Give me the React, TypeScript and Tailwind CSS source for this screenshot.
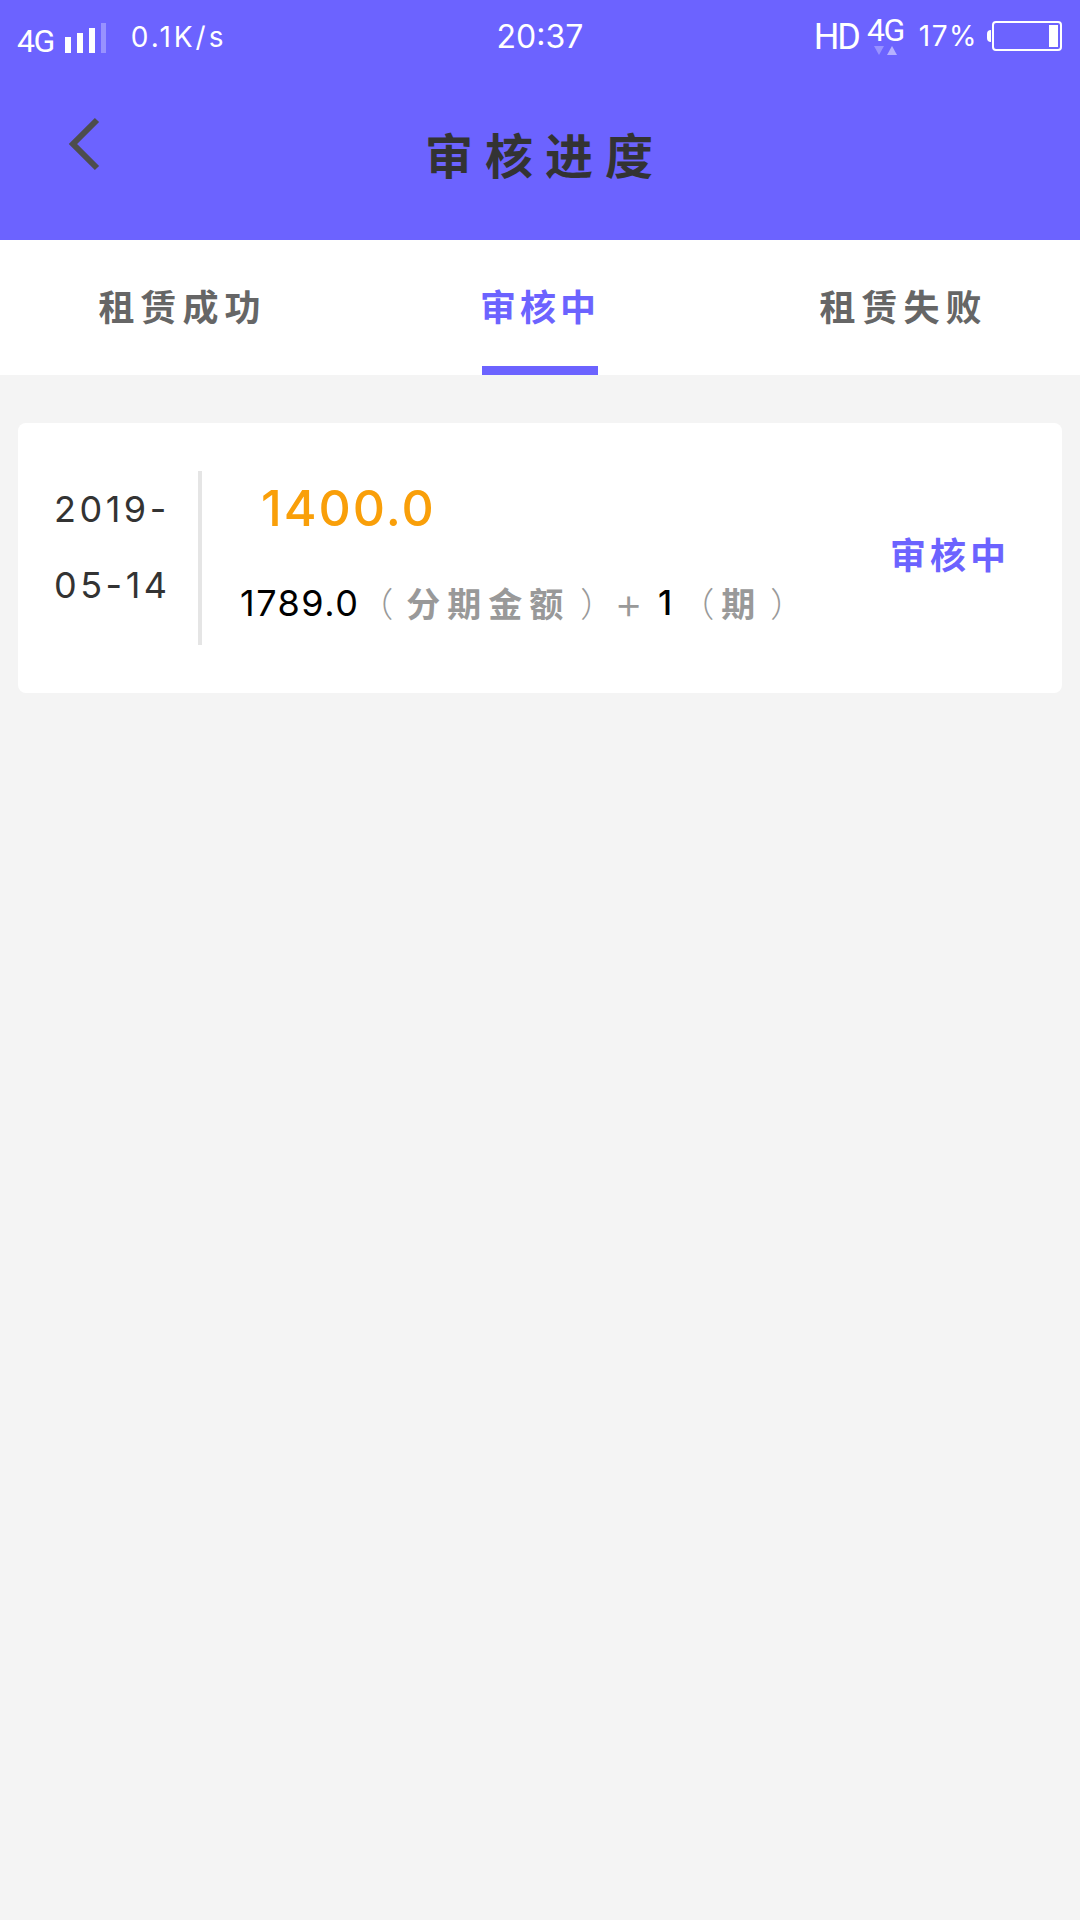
const cjk = "font-['Noto_Sans_CJK_SC',sans-serif] font-bold";
const num = "font-['Inter','Noto_Sans_CJK_SC',sans-serif]";
const paren = "font-['Noto_Sans_CJK_SC',sans-serif] font-light text-[34px] tracking-normal text-[#999]";

function StatusBar() {
  return (
    <div className="grid h-[74px] grid-cols-3 text-white">
      <div className="flex items-start">
        <span className="ml-[17px] mt-[22px] font-['Roboto',sans-serif] text-[32px] leading-[38px] tracking-[-1.5px]">4G</span>
        <div className="ml-[11px] mt-[23px] flex h-[30px] items-end gap-[6px]">
          <span className="h-[16px] w-[6px] bg-white" />
          <span className="h-[20px] w-[6px] bg-white" />
          <span className="h-[25px] w-[6px] bg-white" />
          <span className="h-[30px] w-[5px] bg-white/30" />
        </div>
        <span className={`ml-[25px] mt-[19px] text-[28px] leading-[36px] tracking-[3px] ${num}`}>0.1K/s</span>
      </div>
      <div className={`mt-[18px] text-center text-[32px] leading-[38px] ${num}`}>20:37</div>
      <div className="flex items-start justify-end pr-[18px]">
        <span className="mt-[16px] font-['Roboto',sans-serif] text-[36px] leading-[42px] tracking-[-2px]">HD</span>
        <div className="ml-[8px] flex flex-col items-center">
          <span className="mt-[12px] font-['Roboto',sans-serif] text-[32px] leading-[37px] tracking-[-1.5px]">4G</span>
          <div className="mt-[-3px] flex gap-[3px]">
            <span className="h-0 w-0 border-x-[5px] border-t-[9px] border-x-transparent border-t-white/30" />
            <span className="h-0 w-0 border-x-[5px] border-b-[9px] border-x-transparent border-b-white/50" />
          </div>
        </div>
        <span className={`ml-[15px] mt-[18px] text-[28px] leading-[36px] tracking-[1.5px] ${num}`}>17%</span>
        <div className="ml-[9px] mt-[21px] flex items-center">
          <span className="h-[12px] w-[4px] rounded-l-full bg-white" />
          <div className="ml-[1px] flex h-[30px] w-[70px] justify-end rounded-[4px] border-2 border-white p-[2px]">
            <span className="h-full w-[9px] bg-white" />
          </div>
        </div>
      </div>
    </div>
  );
}

function Header() {
  return (
    <header className="h-[240px] bg-[#6c63ff]">
      <StatusBar />
      <div className="relative flex h-[166px] items-start justify-center">
        <svg className="absolute left-[63px] top-[38px]" width="42" height="60" viewBox="0 0 42 60" fill="none" stroke="#4d4d4d" strokeWidth="6">
          <path d="M34 8L10 32L34 56" />
        </svg>
        <h1 className={`ml-[10px] mt-[46px] text-[48px] leading-[66px] tracking-[12px] text-[#333] ${cjk}`}>审核进度</h1>
      </div>
    </header>
  );
}

function Tabs() {
  return (
    <nav className="grid h-[135px] grid-cols-3 bg-white">
      <div className="flex items-center justify-center pb-[6px] pl-[5px]">
        <span className={`text-[36px] tracking-[6px] text-[#666] ${cjk}`}>租赁成功</span>
      </div>
      <div className="relative flex items-center justify-center pb-[6px]">
        <span className={`text-[36px] tracking-[4px] text-[#6c63ff] ${cjk}`}>审核中</span>
        <span className="absolute bottom-0 left-[122px] h-[9px] w-[116px] bg-[#6c63ff]" />
      </div>
      <div className="flex items-center justify-center pb-[6px] pl-[7px]">
        <span className={`text-[36px] tracking-[6px] text-[#666] ${cjk}`}>租赁失败</span>
      </div>
    </nav>
  );
}

function OrderCard() {
  return (
    <div className="mx-[18px] mt-[48px] flex h-[270px] items-center rounded-[8px] bg-white">
      <div className={`w-[180px] pb-[22px] pl-[36px] text-[36px] leading-[76px] tracking-[3.5px] text-[#333] ${num}`}>
        <div>2019-</div>
        <div>05-14</div>
      </div>
      <div className="h-[174px] w-[4px] bg-[#e5e5e5]" />
      <div className="ml-[38px] flex-1 pb-[11px]">
        <div className={`ml-[21px] text-[50px] font-medium leading-[60px] tracking-[2px] text-[#f99f09] ${num}`}>1400.0</div>
        <div className={`mt-[41px] flex items-center text-[34px] leading-[48px] text-black ${num}`}>
          <span className="text-[36px] tracking-[1.5px]">1789.0</span>
          <span className={paren}>（</span>
          <span className={`ml-[13px] tracking-[7px] text-[#999] ${cjk} text-[34px]`}>分期金额</span>
          <span className={`ml-[10px] ${paren}`}>）</span>
          <span className="text-[44px] font-light text-[#999]">+</span>
          <span className="ml-[15px] font-medium">1</span>
          <span className={`ml-[8px] ${paren}`}>（</span>
          <span className={`ml-[7px] text-[#999] ${cjk} text-[34px]`}>期</span>
          <span className={`ml-[15px] ${paren}`}>）</span>
        </div>
      </div>
      <div className={`mr-[52px] mt-[-10px] text-[36px] tracking-[4px] text-[#6c63ff] ${cjk}`}>审核中</div>
    </div>
  );
}

export default function App() {
  return (
    <div className="min-h-[1920px] w-[1080px] bg-[#f4f4f4]">
      <Header />
      <Tabs />
      <OrderCard />
    </div>
  );
}
